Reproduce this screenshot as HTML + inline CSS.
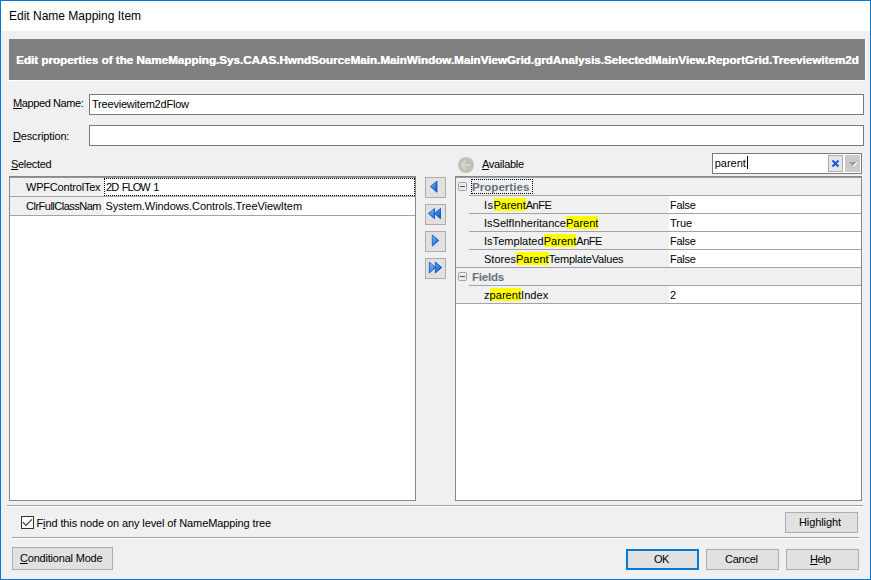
<!DOCTYPE html>
<html><head><meta charset="utf-8">
<style>
*{box-sizing:border-box;margin:0;padding:0}
html,body{width:871px;height:580px;overflow:hidden;background:#f0f0f0}
body{position:relative;font-family:"Liberation Sans",sans-serif;font-size:11px;color:#000}
.a{position:absolute}
.t{position:absolute;white-space:nowrap;line-height:13px;font-size:11px}
.u{text-decoration:underline}
.btn{position:absolute;background:#e1e1e1;border:1px solid #adadad}
.sep{position:absolute;height:1px;background:#a0a0a0}
.gs{background:#a2a2a9}
.hl{background:#ffff00;display:inline-block;height:13px;vertical-align:top;position:relative;top:-1px;padding-top:1px;box-sizing:content-box;height:12px}
</style></head><body>
<!-- window frame -->
<div class="a" style="left:0;top:0;width:871px;height:580px;border:1px solid #0078d7"></div>
<div class="a" style="left:1px;top:1px;width:869px;height:30px;background:#fff"></div>
<div class="t" style="left:9px;top:9px;font-size:12px;line-height:15px;letter-spacing:0">Edit Name Mapping Item</div>

<!-- banner -->
<div class="a" style="left:9px;top:39px;width:857px;height:42px;background:#fff"></div>
<div class="a" style="left:9px;top:39px;width:856px;height:41px;background:#808080;overflow:hidden">
  <div class="t" style="left:7px;top:14px;color:#fff;font-weight:bold;font-size:11.65px;text-shadow:0.4px 0 0 #fff">Edit properties of the NameMapping.Sys.CAAS.HwndSourceMain.MainWindow.MainViewGrid.grdAnalysis.SelectedMainView.ReportGrid.Treeviewitem2d</div>
</div>

<!-- mapped name -->
<div class="t" style="left:13px;top:97px;letter-spacing:-0.4px"><span class="u">M</span>apped Name:</div>
<div class="a" style="left:89px;top:94px;width:775px;height:21px;background:#fff;border:1px solid #7a7a7a"></div>
<div class="t" style="left:92px;top:98px;letter-spacing:-0.2px">Treeviewitem2dFlow</div>

<div class="t" style="left:13px;top:130px;letter-spacing:-0.15px"><span class="u">D</span>escription:</div>
<div class="a" style="left:89px;top:125px;width:775px;height:21px;background:#fff;border:1px solid #7a7a7a"></div>

<div class="t" style="left:11px;top:158px;letter-spacing:-0.3px"><span class="u">S</span>elected</div>

<!-- left list -->
<div class="a" style="left:9px;top:176px;width:407px;height:325px;background:#fff;border:1px solid #828790"></div>
<div class="a" style="left:10px;top:177px;width:405px;height:1px;background:#969699"></div>
<div class="a" style="left:10px;top:178px;width:94px;height:37px;background:#f0f0f0"></div>
<div class="sep gs" style="left:10px;top:196px;width:405px"></div>
<div class="sep gs" style="left:10px;top:215px;width:405px"></div>
<div class="a" style="left:104px;top:178px;width:311px;height:18px;border:1px dotted #000"></div>
<div class="t" style="left:26px;top:181px;letter-spacing:-0.2px">WPFControlTex</div>
<div class="t" style="left:106px;top:181px;letter-spacing:-0.95px;word-spacing:1.5px">2D FLOW 1</div>
<div class="t" style="left:26px;top:200px;letter-spacing:-0.5px">ClrFullClassNam</div>
<div class="t" style="left:105.5px;top:200px;letter-spacing:-0.06px">System.Windows.Controls.TreeViewItem</div>

<!-- middle buttons -->
<div class="btn" style="left:425px;top:177px;width:21px;height:21px"></div>
<div class="btn" style="left:425px;top:204px;width:21px;height:21px"></div>
<div class="btn" style="left:425px;top:231px;width:21px;height:21px"></div>
<div class="btn" style="left:425px;top:258px;width:21px;height:21px"></div>
<svg class="a" style="left:425px;top:177px" width="21" height="102" viewBox="0 0 21 102">
  <defs><linearGradient id="bg" x1="0" y1="0" x2="1" y2="1"><stop offset="0" stop-color="#8cc8ff"/><stop offset="0.5" stop-color="#3a8ae8"/><stop offset="1" stop-color="#0a4cc0"/></linearGradient></defs>
  <g fill="url(#bg)" stroke="#0a4ab8" stroke-width="0.8" stroke-linejoin="round">
  <path d="M5.3 9.5 L12 4.2 L12 15.3 Z"/>
  <path d="M3.3 36.5 L9.5 31.5 L9.5 41.7 Z M9.3 36.5 L15.5 31.5 L15.5 41.7 Z"/>
  <path d="M7.3 58 L7.3 69 L13.8 63.5 Z"/>
  <path d="M4.3 85 L4.3 96 L10.5 90.5 Z M10.3 85 L10.3 96 L16.8 90.5 Z"/>
  </g>
</svg>

<!-- available -->
<svg class="a" style="left:457px;top:156px" width="18" height="18" viewBox="0 0 18 18">
  <circle cx="9" cy="9" r="8" fill="#c3c0b8"/>
  <path d="M4.5 9 L8.5 5 M4.5 9 L8.5 13 M4.5 9 H13" stroke="#d6d4ce" stroke-width="2" fill="none"/>
</svg>
<div class="t" style="left:482px;top:158px;letter-spacing:-0.3px"><span class="u">A</span>vailable</div>

<!-- search box -->
<div class="a" style="left:712px;top:153px;width:150px;height:21px;background:#fff;border:1px solid #7a7a7a"></div>
<div class="t" style="left:714.7px;top:157px">parent</div>
<div class="a" style="left:747px;top:156px;width:1px;height:13px;background:#000"></div>
<div class="btn" style="left:828px;top:155px;width:15px;height:17px;background:#e5e5e5"></div>
<svg class="a" style="left:828px;top:155px" width="15" height="17" viewBox="0 0 15 17"><path d="M4.5 5.5 L10.5 11.5 M10.5 5.5 L4.5 11.5" stroke="#1458d8" stroke-width="2"/></svg>
<div class="btn" style="left:845px;top:155px;width:15px;height:17px;background:#cbcbcb;border-color:#cbcbcb"></div>
<svg class="a" style="left:845px;top:155px" width="15" height="17" viewBox="0 0 15 17"><path d="M4 7 H12 L8 11 Z" fill="#9a9a9a"/><path d="M8.5 11 L12 7.5" stroke="#fff" stroke-width="1.2"/></svg>

<!-- property grid -->
<div class="a" style="left:455px;top:176px;width:407px;height:325px;background:#fff;border:1px solid #828790"></div>
<div class="a" style="left:456px;top:178px;width:405px;height:125px;background:#f0f0f0"></div>
<div class="a" style="left:456px;top:177px;width:405px;height:1px;background:#a0a0a0"></div>
<div class="a" style="left:669px;top:196px;width:192px;height:71px;background:#fff"></div>
<div class="a" style="left:669px;top:286px;width:192px;height:17px;background:#fff"></div>
<div class="sep gs" style="left:469px;top:195px;width:392px"></div>
<div class="sep gs" style="left:469px;top:213px;width:392px"></div>
<div class="sep gs" style="left:469px;top:231px;width:392px"></div>
<div class="sep gs" style="left:469px;top:249px;width:392px"></div>
<div class="sep gs" style="left:456px;top:267px;width:405px"></div>
<div class="sep gs" style="left:469px;top:285px;width:392px"></div>
<div class="sep gs" style="left:456px;top:303px;width:405px"></div>
<!-- minus boxes -->
<svg class="a" style="left:458px;top:182px" width="9" height="9" viewBox="0 0 9 9"><rect x="0.5" y="0.5" width="8" height="8" rx="1" fill="#ebebeb" stroke="#a0a0a0"/><path d="M2 4.5 H7" stroke="#3050a0"/></svg>
<svg class="a" style="left:458px;top:272px" width="9" height="9" viewBox="0 0 9 9"><rect x="0.5" y="0.5" width="8" height="8" rx="1" fill="#ebebeb" stroke="#a0a0a0"/><path d="M2 4.5 H7" stroke="#3050a0"/></svg>
<div class="a" style="left:471px;top:179px;width:62px;height:15px;border:1px dotted #000"></div>
<div class="t" style="left:472px;top:180px;font-weight:bold;color:#66717e;font-size:11.6px">Properties</div>
<div class="t" style="left:484px;top:199px;letter-spacing:-0.2px"><span style="letter-spacing:0.5px">Is</span><span class="hl" style="letter-spacing:-0.05px">Parent</span><span style="letter-spacing:-0.45px">AnFE</span></div>
<div class="t" style="left:484px;top:217px;letter-spacing:0px">IsSelfInheritance<span class="hl">Parent</span></div>
<div class="t" style="left:484px;top:235px;letter-spacing:-0.15px"><span style="letter-spacing:0.03px">IsTemplated</span><span class="hl" style="letter-spacing:0.05px">Parent</span><span style="letter-spacing:-0.5px">AnFE</span></div>
<div class="t" style="left:484px;top:253px;letter-spacing:-0.13px"><span style="letter-spacing:0.03px">Stores</span><span class="hl" style="letter-spacing:0.05px">Parent</span><span style="letter-spacing:-0.2px">TemplateValues</span></div>
<div class="t" style="left:472px;top:270px;font-weight:bold;color:#66717e;font-size:11.6px;letter-spacing:-0.25px">Fields</div>
<div class="t" style="left:484px;top:289px;letter-spacing:0.05px">z<span class="hl">parent</span>Index</div>
<div class="t" style="left:670px;top:199px;letter-spacing:-0.25px">False</div>
<div class="t" style="left:670px;top:217px">True</div>
<div class="t" style="left:670px;top:235px;letter-spacing:-0.25px">False</div>
<div class="t" style="left:670px;top:253px;letter-spacing:-0.25px">False</div>
<div class="t" style="left:670px;top:289px">2</div>

<!-- separator 1 -->
<div class="sep" style="left:7px;top:505px;width:856px"></div>
<div class="a" style="left:7px;top:506px;width:856px;height:1px;background:#fff"></div>

<!-- checkbox -->
<div class="a" style="left:21px;top:516px;width:13px;height:13px;background:#fff;border:1px solid #333"></div>
<svg class="a" style="left:21px;top:516px" width="13" height="13" viewBox="0 0 13 13"><path d="M1.8 6.2 L5 9.4 L11 3.3" stroke="#3a3a3a" stroke-width="1.15" fill="none"/></svg>
<div class="t" style="left:36.5px;top:517px;letter-spacing:-0.11px">F<span class="u">i</span>nd this node on any level of NameMapping tree</div>

<div class="btn" style="left:785px;top:512px;width:73px;height:21px"></div>
<div class="t" style="left:799px;top:516px;letter-spacing:-0.1px">Hi<span class="u">g</span>hlight</div>

<!-- separator 2 -->
<div class="sep" style="left:12px;top:537px;width:847px"></div>
<div class="a" style="left:12px;top:538px;width:847px;height:1px;background:#fff"></div>

<div class="btn" style="left:12px;top:547px;width:101px;height:23px"></div>
<div class="t" style="left:20px;top:552px;letter-spacing:-0.2px"><span class="u">C</span>onditional Mode</div>

<div class="btn" style="left:626px;top:549px;width:73px;height:21px;border:2px solid #0078d7"></div>
<div class="t" style="left:654px;top:553px;letter-spacing:-0.6px">OK</div>
<div class="btn" style="left:706px;top:549px;width:73px;height:21px"></div>
<div class="t" style="left:725px;top:553px;letter-spacing:-0.25px">Cancel</div>
<div class="btn" style="left:786px;top:549px;width:73px;height:21px"></div>
<div class="t" style="left:810px;top:553px;letter-spacing:-0.5px"><span class="u">H</span>elp</div>
</body></html>
